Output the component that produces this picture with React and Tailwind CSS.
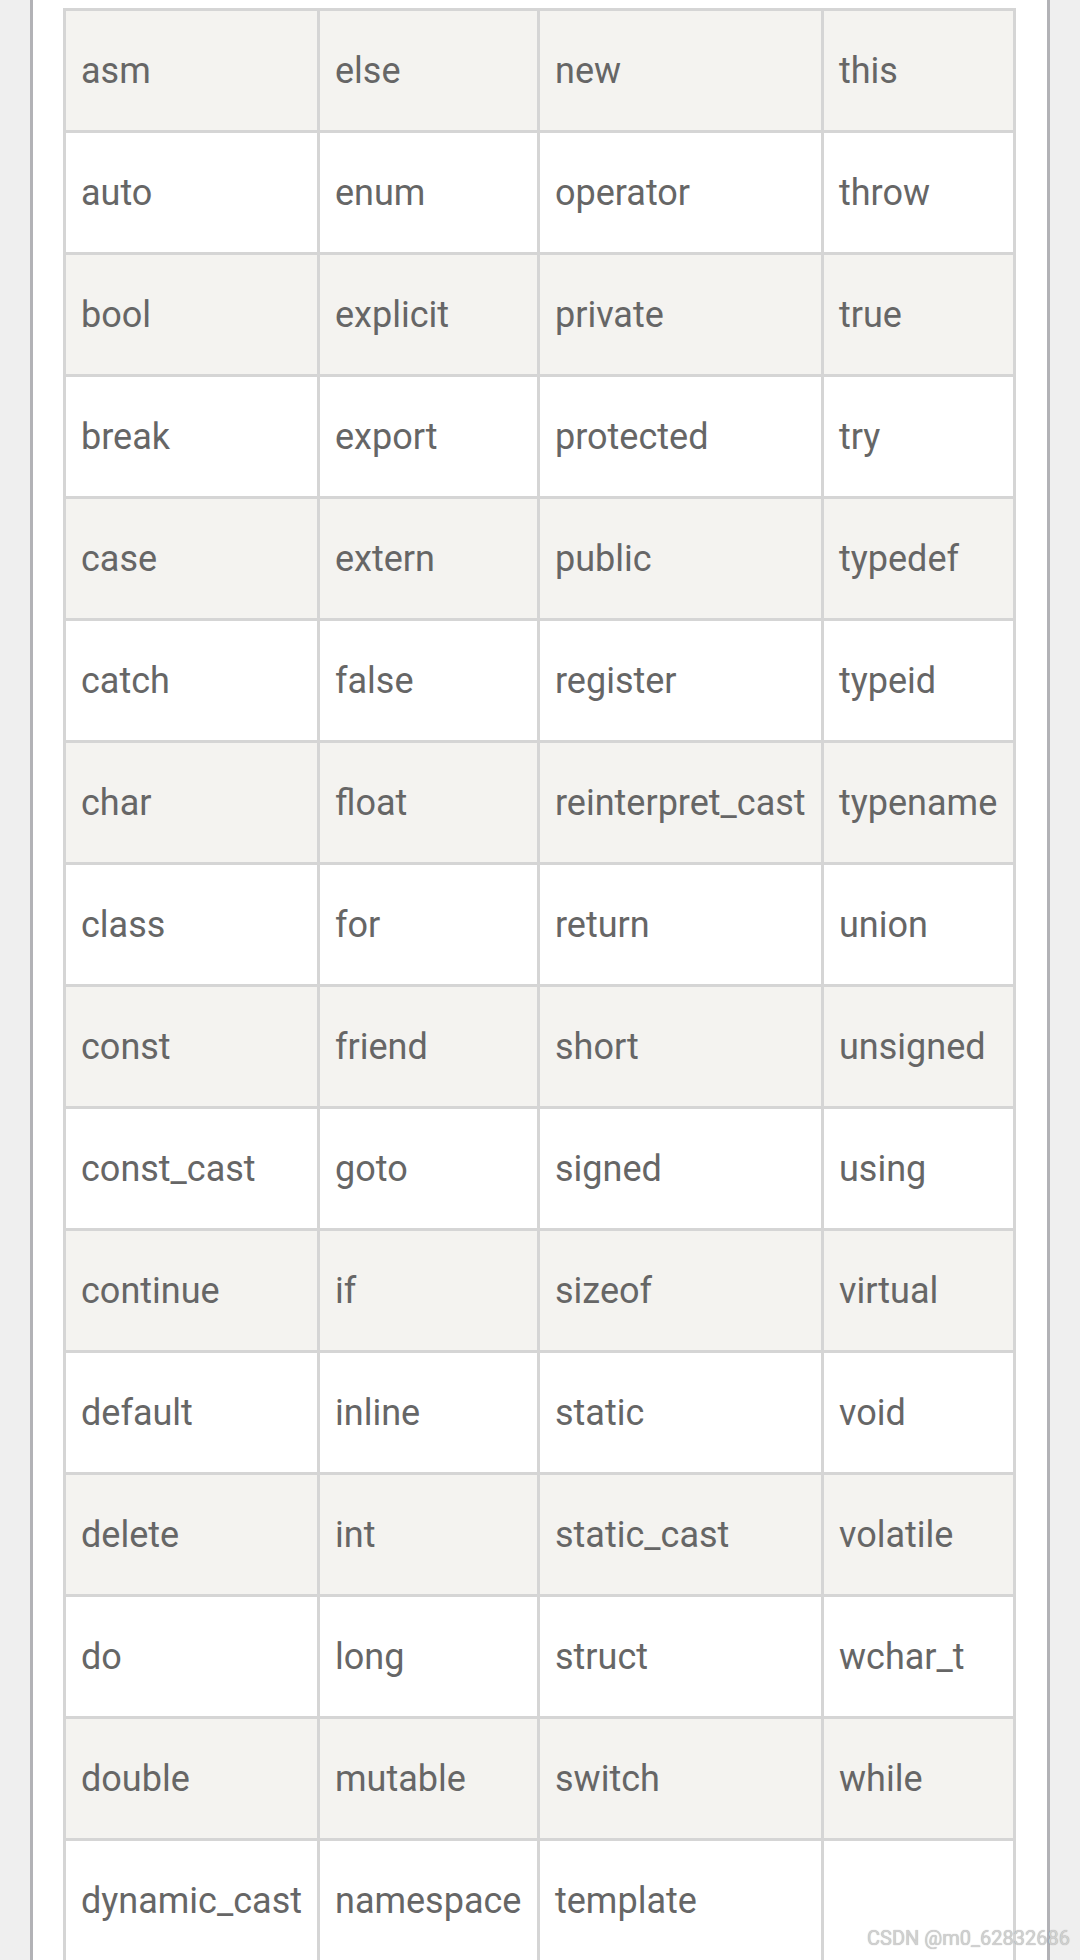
import React from "react";

const rows = [
  ["asm", "else", "new", "this"],
  ["auto", "enum", "operator", "throw"],
  ["bool", "explicit", "private", "true"],
  ["break", "export", "protected", "try"],
  ["case", "extern", "public", "typedef"],
  ["catch", "false", "register", "typeid"],
  ["char", "float", "reinterpret_cast", "typename"],
  ["class", "for", "return", "union"],
  ["const", "friend", "short", "unsigned"],
  ["const_cast", "goto", "signed", "using"],
  ["continue", "if", "sizeof", "virtual"],
  ["default", "inline", "static", "void"],
  ["delete", "int", "static_cast", "volatile"],
  ["do", "long", "struct", "wchar_t"],
  ["double", "mutable", "switch", "while"],
  ["dynamic_cast", "namespace", "template", ""],
];

export default function App() {
  return (
    <div className="relative h-[1960px] w-[1080px] overflow-hidden bg-[#efefef] font-['Roboto',sans-serif]">
      <div className="mx-[30px] h-full border-x-[3px] border-[#b2b2b6] bg-white px-[30px] pt-[8px]">
        <div className="grid w-[953px] grid-cols-[254px_220px_284px_192px] border-l-[3px] border-t-[3px] border-[#d5d5d5]">
          {rows.map((row, i) =>
            row.map((cell, j) => (
              <div
                key={i + "-" + j}
                className={`flex h-[122px] items-center whitespace-nowrap border-b-[3px] border-r-[3px] border-[#d5d5d5] pl-[15px] pt-[1px] text-[36px] leading-none text-[#666666] ${
                  i % 2 === 0 ? "bg-[#f4f3f0]" : "bg-white"
                }`}
              >
                {cell}
              </div>
            ))
          )}
        </div>
      </div>
      <div className="absolute left-[867px] top-[1928px] text-[20px] leading-none text-[#d0d0d0] [text-shadow:0_0_1px_rgba(0,0,0,0.35)] font-['Roboto',sans-serif]">
        CSDN @m0_62832686
      </div>
    </div>
  );
}
